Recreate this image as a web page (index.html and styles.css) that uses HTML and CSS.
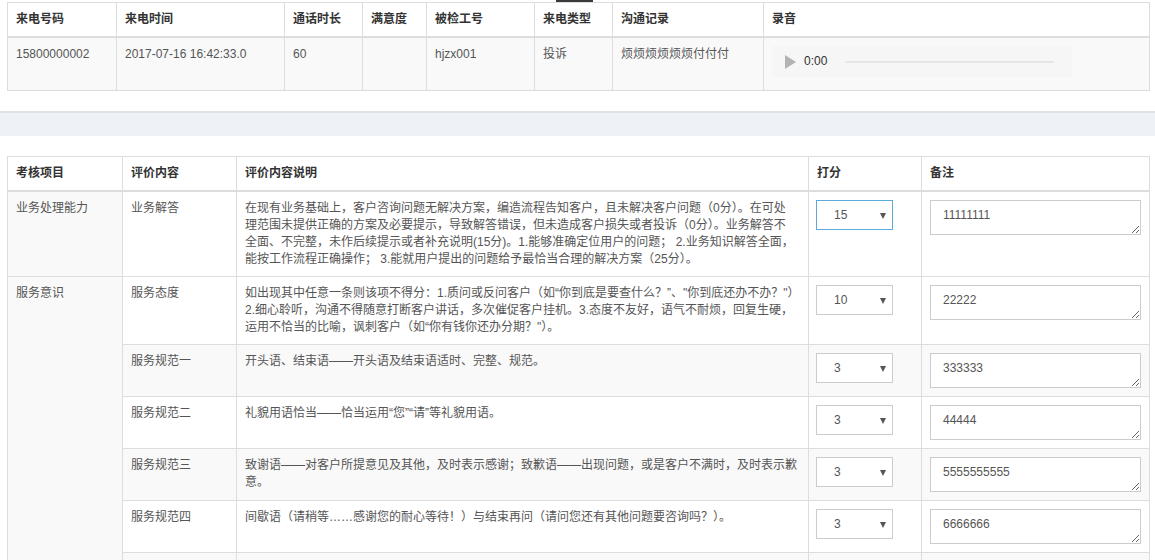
FILE: index.html
```html
<!DOCTYPE html>
<html lang="zh-CN">
<head>
<meta charset="utf-8">
<title>质检评分</title>
<link rel="stylesheet" href="styles.css">
</head>
<body>
<div class="wrap">
  <div class="topstrip"><div class="topstrip-mark"></div></div>
  <table class="grid info">
    <colgroup>
      <col class="c-a"><col class="c-b"><col class="c-c"><col class="c-d"><col class="c-e"><col class="c-f"><col class="c-g"><col class="c-h">
    </colgroup>
    <thead>
      <tr>
        <th>来电号码</th><th>来电时间</th><th>通话时长</th><th>满意度</th><th>被检工号</th><th>来电类型</th><th>沟通记录</th><th>录音</th>
      </tr>
    </thead>
    <tbody>
      <tr class="shade">
        <td>15800000002</td>
        <td>2017-07-16 16:42:33.0</td>
        <td>60</td>
        <td></td>
        <td>hjzx001</td>
        <td>投诉</td>
        <td>烦烦烦烦烦烦付付付</td>
        <td>
          <div class="audio-cell">
            <div class="player">
              <span class="play"></span>
              <span class="time">0:00</span>
              <span class="track"></span>
            </div>
          </div>
        </td>
      </tr>
    </tbody>
  </table>
</div>

<div class="band"></div>

<div class="wrap">
  <table class="grid score">
    <colgroup>
      <col class="s-a"><col class="s-b"><col class="s-c"><col class="s-d"><col class="s-e">
    </colgroup>
    <thead>
      <tr>
        <th>考核项目</th><th>评价内容</th><th>评价内容说明</th><th>打分</th><th>备注</th>
      </tr>
    </thead>
    <tbody>
      <tr>
        <td class="cat">业务处理能力</td>
        <td>业务解答</td>
        <td>在现有业务基础上，客户咨询问题无解决方案，编造流程告知客户，且未解决客户问题（0分）。在可处<br>理范围未提供正确的方案及必要提示，导致解答错误，但未造成客户损失或者投诉（0分）。业务解答不<br>全面、不完整，未作后续提示或者补充说明(15分)。1.能够准确定位用户的问题； 2.业务知识解答全面，<br>能按工作流程正确操作； 3.能就用户提出的问题给予最恰当合理的解决方案（25分）。</td>
        <td><div class="sel focus"><select><option>15</option></select></div></td>
        <td><textarea>11111111</textarea></td>
      </tr>
      <tr>
        <td class="cat" rowspan="6">服务意识</td>
        <td>服务态度</td>
        <td>如出现其中任意一条则该项不得分：1.质问或反问客户（如“你到底是要查什么？”、"你到底还办不办？"）2.细心聆听，沟通不得随意打断客户讲话，多次催促客户挂机。3.态度不友好，语气不耐烦，回复生硬，运用不恰当的比喻，讽刺客户（如“你有钱你还办分期？"）。</td>
        <td><div class="sel"><select><option>10</option></select></div></td>
        <td><textarea>22222</textarea></td>
      </tr>
      <tr class="shade">
        <td>服务规范一</td>
        <td>开头语、结束语——开头语及结束语适时、完整、规范。</td>
        <td><div class="sel"><select><option>3</option></select></div></td>
        <td><textarea>333333</textarea></td>
      </tr>
      <tr>
        <td>服务规范二</td>
        <td>礼貌用语恰当——恰当运用“您”“请”等礼貌用语。</td>
        <td><div class="sel"><select><option>3</option></select></div></td>
        <td><textarea>44444</textarea></td>
      </tr>
      <tr class="shade">
        <td>服务规范三</td>
        <td>致谢语——对客户所提意见及其他，及时表示感谢；致歉语——出现问题，或是客户不满时，及时表示歉意。</td>
        <td><div class="sel"><select><option>3</option></select></div></td>
        <td><textarea>5555555555</textarea></td>
      </tr>
      <tr>
        <td>服务规范四</td>
        <td>间歇语（请稍等……感谢您的耐心等待！）与结束再问（请问您还有其他问题要咨询吗？）。</td>
        <td><div class="sel"><select><option>3</option></select></div></td>
        <td><textarea>6666666</textarea></td>
      </tr>
      <tr class="shade">
        <td></td>
        <td></td>
        <td><div class="sel"><select><option>3</option></select></div></td>
        <td><textarea></textarea></td>
      </tr>
    </tbody>
  </table>
</div>
</body>
</html>
```

FILE: styles.css
```css
html, body {
  margin: 0;
  padding: 0;
  background: #ffffff;
}

body {
  font-family: "Liberation Sans", "Noto Sans CJK SC", sans-serif;
  font-size: 12px;
  line-height: 17px;
  color: #555555;
}

.wrap {
  padding: 0 6px 0 7px;
}

.topstrip {
  height: 2px;
  display: flex;
}

.topstrip-mark {
  width: 37px;
  height: 2px;
  margin-left: 549px;
  background: #3a3a3a;
}

.grid {
  width: 1142px;
  table-layout: fixed;
  border-collapse: collapse;
  border: 1px solid #dddddd;
}

.grid th,
.grid td {
  border: 1px solid #dddddd;
  padding: 8px;
  text-align: left;
  vertical-align: top;
  word-break: break-all;
}

.grid th {
  font-weight: bold;
  color: #333333;
  border-bottom: 2px solid #dddddd;
  background: #ffffff;
}

.grid td {
  background: #ffffff;
}

.grid tr.shade td,
.grid td.cat {
  background: #f9f9f9;
}

/* info table columns */
.c-a { width: 109px; }
.c-b { width: 168px; }
.c-c { width: 78px; }
.c-d { width: 64px; }
.c-e { width: 108px; }
.c-f { width: 78px; }
.c-g { width: 151px; }
.c-h { width: 386px; }

.audio-cell {
  height: 36px;
}

.player {
  width: 300px;
  height: 31px;
  background: #f6f6f6;
  border-radius: 2px;
  display: flex;
  align-items: center;
  padding-left: 13px;
  box-sizing: border-box;
}

.play {
  width: 0;
  height: 0;
  border-left: 11px solid #b3b3b3;
  border-top: 7px solid transparent;
  border-bottom: 7px solid transparent;
  margin-right: 8px;
}

.time {
  color: #333333;
  font-size: 12px;
}

.track {
  width: 209px;
  height: 2px;
  background: #e6e6e6;
  margin-left: 18px;
}

.band {
  margin-top: 20px;
  height: 23px;
  border-top: 2px solid #dfe3e7;
  background: #eef1f5;
  margin-bottom: 20px;
}

/* score table columns */
.s-a { width: 115px; }
.s-b { width: 114px; }
.s-c { width: 572px; }
.s-d { width: 113px; }
.s-e { width: 228px; }

.sel {
  position: relative;
  width: 77px;
  height: 30px;
  margin-left: -1px;
}

.sel select {
  appearance: none;
  -webkit-appearance: none;
  display: block;
  width: 77px;
  height: 30px;
  box-sizing: border-box;
  border: 1px solid #cccccc;
  border-radius: 0;
  background: #ffffff;
  padding: 0 0 0 17px;
  font-family: "Liberation Sans", "Noto Sans CJK SC", sans-serif;
  font-size: 12px;
  color: #555555;
  outline: none;
}

.sel.focus select {
  border-color: #5aaadb;
}

.sel::after {
  content: "";
  position: absolute;
  right: 7px;
  top: 13px;
  width: 0;
  height: 0;
  border-left: 3.5px solid transparent;
  border-right: 3.5px solid transparent;
  border-top: 6px solid #555555;
  pointer-events: none;
}

.grid textarea {
  display: block;
  width: 211px;
  height: 35px;
  box-sizing: border-box;
  border: 1px solid #cccccc;
  border-radius: 0;
  padding: 6px 12px;
  margin: 0;
  font-family: "Liberation Sans", "Noto Sans CJK SC", sans-serif;
  font-size: 12px;
  line-height: 17px;
  color: #555555;
  background: #ffffff;
  resize: both;
  overflow: hidden;
}
```
